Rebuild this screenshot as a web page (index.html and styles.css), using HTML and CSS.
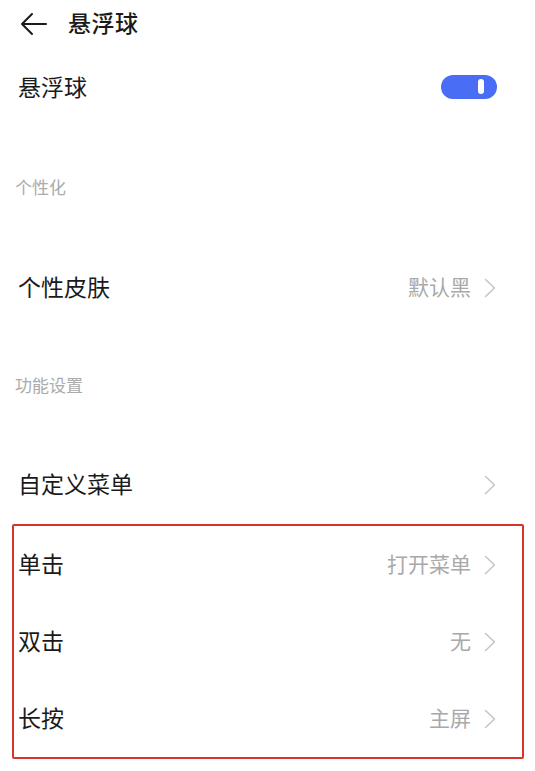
FILE: index.html
```html
<!DOCTYPE html>
<html lang="zh-CN">
<head>
<meta charset="utf-8">
<title>悬浮球</title>
<link rel="stylesheet" href="styles.css">
</head>
<body>
<div class="page">
  <header class="topbar">
    <svg class="back" width="28" height="24" viewBox="0 0 28 24" aria-hidden="true">
      <path d="M26 12 H2 M12 2 L2 12 L12 22" fill="none" stroke="#1a1a1a" stroke-width="2" stroke-linecap="round" stroke-linejoin="round"/>
    </svg>
    <h1 class="title">悬浮球</h1>
  </header>

  <div class="row row-switch">
    <span class="label">悬浮球</span>
    <span class="toggle"><span class="knob"></span></span>
  </div>

  <div class="section section-first">个性化</div>

  <div class="row row-skin">
    <span class="label">个性皮肤</span>
    <span class="trail"><span class="value">默认黑</span><svg class="chev" width="12" height="20" viewBox="0 0 12 20" aria-hidden="true"><path d="M1.5 1.5 L10.5 10 L1.5 18.5" fill="none" stroke="#c4c4c4" stroke-width="1.5" stroke-linecap="round" stroke-linejoin="round"/></svg></span>
  </div>

  <div class="section section-second">功能设置</div>

  <div class="row row-menu">
    <span class="label">自定义菜单</span>
    <span class="trail"><svg class="chev" width="12" height="20" viewBox="0 0 12 20" aria-hidden="true"><path d="M1.5 1.5 L10.5 10 L1.5 18.5" fill="none" stroke="#c4c4c4" stroke-width="1.5" stroke-linecap="round" stroke-linejoin="round"/></svg></span>
  </div>

  <div class="box">
    <div class="row box-row">
      <span class="label">单击</span>
      <span class="trail"><span class="value">打开菜单</span><svg class="chev" width="12" height="20" viewBox="0 0 12 20" aria-hidden="true"><path d="M1.5 1.5 L10.5 10 L1.5 18.5" fill="none" stroke="#c4c4c4" stroke-width="1.5" stroke-linecap="round" stroke-linejoin="round"/></svg></span>
    </div>
    <div class="row box-row">
      <span class="label">双击</span>
      <span class="trail"><span class="value">无</span><svg class="chev" width="12" height="20" viewBox="0 0 12 20" aria-hidden="true"><path d="M1.5 1.5 L10.5 10 L1.5 18.5" fill="none" stroke="#c4c4c4" stroke-width="1.5" stroke-linecap="round" stroke-linejoin="round"/></svg></span>
    </div>
    <div class="row box-row">
      <span class="label">长按</span>
      <span class="trail"><span class="value">主屏</span><svg class="chev" width="12" height="20" viewBox="0 0 12 20" aria-hidden="true"><path d="M1.5 1.5 L10.5 10 L1.5 18.5" fill="none" stroke="#c4c4c4" stroke-width="1.5" stroke-linecap="round" stroke-linejoin="round"/></svg></span>
    </div>
  </div>
</div>
</body>
</html>
```

FILE: styles.css
```css
*, *::before, *::after {
  box-sizing: border-box;
}

html, body {
  margin: 0;
  padding: 0;
  background: #ffffff;
}

body {
  font-family: "Noto Sans CJK SC", "Noto Sans", sans-serif;
  color: #1a1a1a;
}

.page {
  width: 535px;
  min-height: 771px;
  display: flex;
  flex-direction: column;
}

.topbar {
  height: 48px;
  display: flex;
  align-items: center;
  padding-left: 20px;
  padding-bottom: 3px;
  gap: 20px;
}

.back {
  display: block;
  flex: none;
  margin-top: 3px;
}

.title {
  margin: 0;
  font-size: 23px;
  font-weight: 500;
  line-height: 1;
  letter-spacing: 0.5px;
}

.row {
  display: flex;
  align-items: center;
  justify-content: space-between;
  padding-left: 18px;
  padding-right: 39px;
}

.row-switch {
  height: 80px;
  padding-right: 38px;
}

.row-switch .label,
.row-skin .label,
.row-menu .label,
.box-row .label {
  margin-bottom: 3px;
}

.row-skin {
  height: 79px;
}

.row-menu {
  height: 80px;
}

.label {
  font-size: 23px;
  line-height: 1;
  color: #1a1a1a;
}

.trail {
  display: flex;
  align-items: center;
  gap: 13px;
}

.value {
  font-size: 21px;
  line-height: 1;
  color: #a9a9a9;
  margin-bottom: 3px;
}

.chev {
  display: block;
  flex: none;
}

.toggle {
  position: relative;
  width: 56px;
  height: 24px;
  border-radius: 12px;
  background: #4a6df5;
  margin-bottom: 2px;
}

.knob {
  position: absolute;
  right: 13px;
  top: 4px;
  width: 6px;
  height: 15px;
  border-radius: 3px;
  background: #ffffff;
}

.section {
  display: flex;
  align-items: center;
  padding-left: 15px;
  padding-bottom: 3px;
  font-size: 17px;
  line-height: 1;
  color: #ababab;
}

.section-first {
  height: 120px;
}

.section-second {
  height: 118px;
}

.box {
  margin-left: 12px;
  width: 512px;
  border: 2px solid #d7352c;
  border-radius: 2px;
  margin-top: -1px;
}

.box-row {
  height: 77px;
  padding-left: 4px;
  padding-right: 26px;
}
```
